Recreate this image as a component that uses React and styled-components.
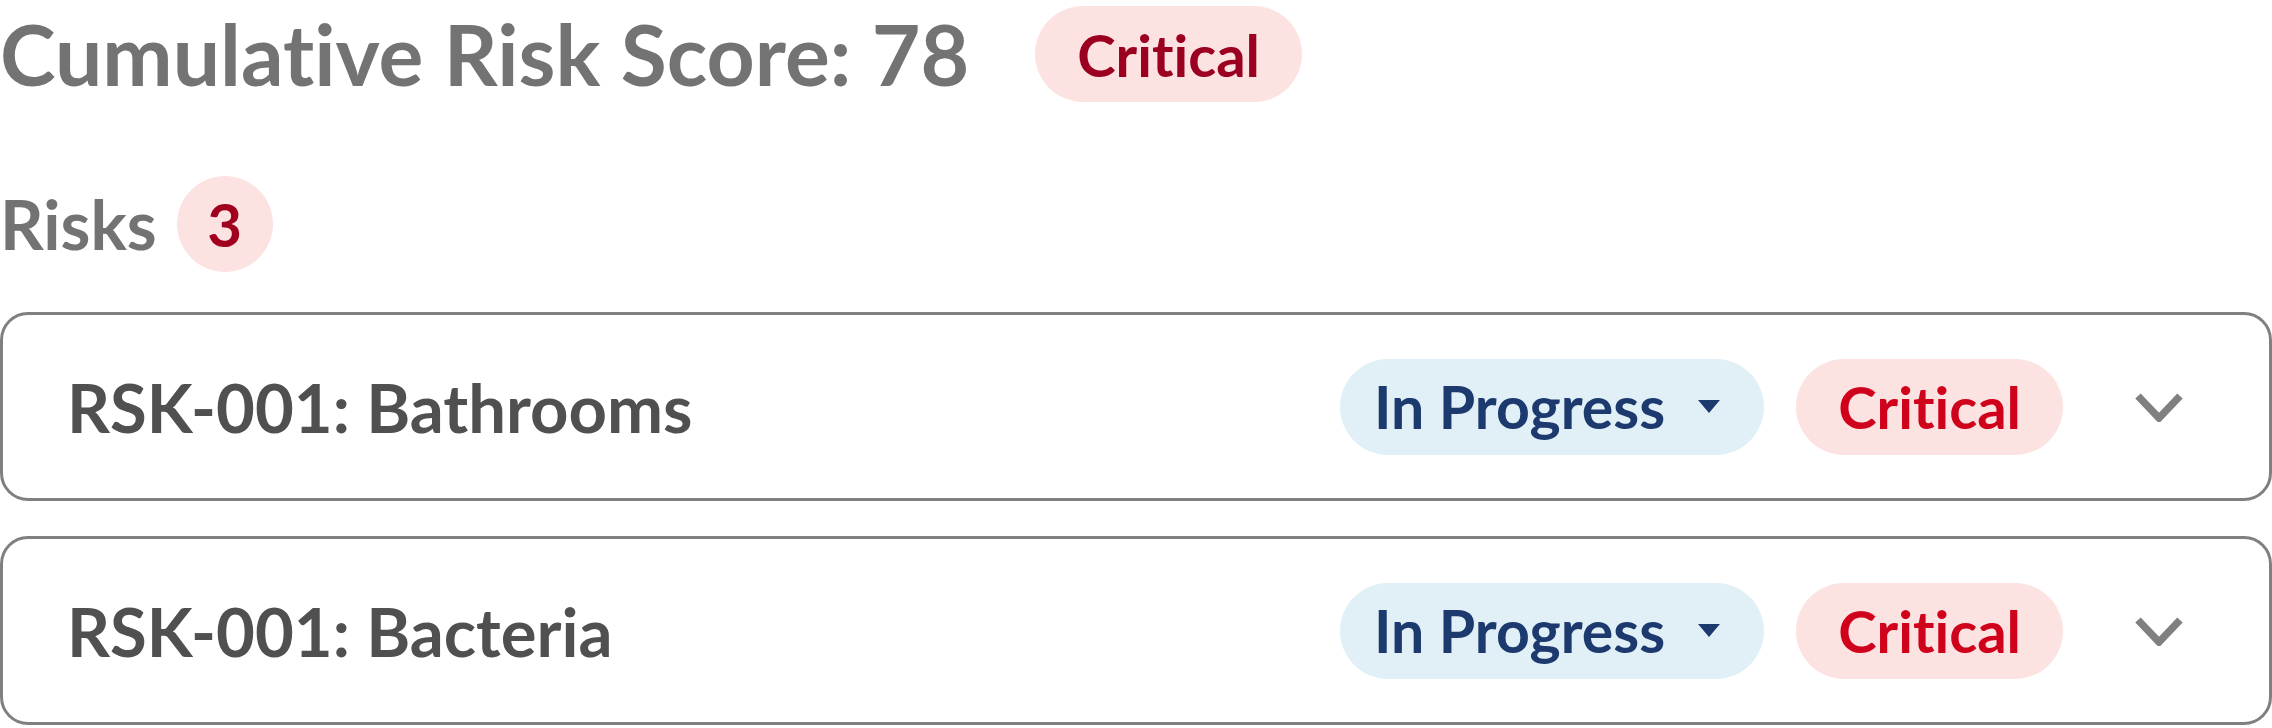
import styled, { createGlobalStyle } from "styled-components";

const Global = createGlobalStyle`
  html, body {
    margin: 0;
    padding: 0;
    background: #ffffff;
    font-family: "Lato", "Noto Sans", sans-serif;
    font-variant-ligatures: none;
  }
`;

const Page = styled.div`
  width: 2272px;
  display: flex;
  flex-direction: column;
`;

const Header = styled.div`
  display: flex;
  align-items: center;
  gap: 66px;
  margin-top: 6px;
`;

const Title = styled.h1`
  margin: 0;
  font-size: 84px;
  font-weight: 700;
  color: #737373;
  line-height: 1;
`;

const Badge = styled.span`
  display: inline-flex;
  align-items: center;
  justify-content: center;
  height: 96px;
  padding: 0 42px;
  border-radius: 48px;
  background: #fde2e2;
  color: ${p => p.color || "#9b0020"};
  font-size: 58px;
  font-weight: 700;
  box-sizing: border-box;
`;

const SectionRow = styled.div`
  display: flex;
  align-items: center;
  gap: 20px;
  margin-top: 74px;
`;

const SectionTitle = styled.h2`
  margin: 0;
  font-size: 68px;
  font-weight: 700;
  color: #737373;
  line-height: 1;
`;

const Count = styled.span`
  display: inline-flex;
  align-items: center;
  justify-content: center;
  width: 96px;
  height: 96px;
  border-radius: 50%;
  background: #fde2e2;
  color: #a0001e;
  font-size: 60px;
  font-weight: 700;
`;

const List = styled.div`
  display: flex;
  flex-direction: column;
  gap: 35px;
  margin-top: 40px;
`;

const Card = styled.div`
  display: flex;
  align-items: center;
  height: 189px;
  box-sizing: border-box;
  border: 3px solid #808080;
  border-radius: 28px;
  padding: 0 86px 0 64px;
`;

const RiskName = styled.div`
  flex: 1;
  font-size: 67px;
  font-weight: 700;
  color: #505050;
`;

const Actions = styled.div`
  display: flex;
  align-items: center;
`;

const StatusPill = styled.button`
  display: inline-flex;
  align-items: center;
  gap: 33px;
  height: 96px;
  padding: 0 44px 0 34px;
  border: none;
  border-radius: 48px;
  background: #e1eff7;
  color: #1c3a6e;
  font-family: inherit;
  font-size: 59px;
  font-weight: 700;
  margin-right: 32px;
`;

const Caret = styled.span`
  width: 0;
  height: 0;
  border-left: 11px solid transparent;
  border-right: 11px solid transparent;
  border-top: 13px solid #1c3a6e;
`;

const Toggle = styled.button`
  display: inline-flex;
  border: none;
  background: none;
  padding: 0;
  margin-left: 72px;
`;

const Chevron = () => (
  <svg width="48" height="30" viewBox="0 0 48 30" fill="none">
    <polyline points="3,4 24,26 45,4" stroke="#808080" strokeWidth="7.5" />
  </svg>
);

const risks = [
  { id: "RSK-001", name: "Bathrooms" },
  { id: "RSK-001", name: "Bacteria" },
];

export default function App() {
  return (
    <Page>
      <Global />
      <Header>
        <Title>Cumulative Risk Score: 78</Title>
        <Badge>Critical</Badge>
      </Header>
      <SectionRow>
        <SectionTitle>Risks</SectionTitle>
        <Count>3</Count>
      </SectionRow>
      <List>
        {risks.map((r, i) => (
          <Card key={i}>
            <RiskName>{r.id}: {r.name}</RiskName>
            <Actions>
              <StatusPill>
                In Progress
                <Caret />
              </StatusPill>
              <Badge color="#d0021b">Critical</Badge>
              <Toggle>
                <Chevron />
              </Toggle>
            </Actions>
          </Card>
        ))}
      </List>
    </Page>
  );
}
